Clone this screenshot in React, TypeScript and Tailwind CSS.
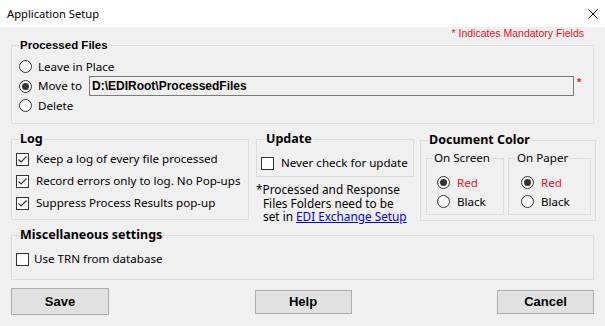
import type { ReactNode } from 'react';

const Radio = ({ checked = false }: { checked?: boolean }) => (
    <span className="w-[13px] h-[13px] shrink-0 rounded-full border border-[#333333] bg-white flex items-center justify-center">
        {checked && <span className="w-[7px] h-[7px] rounded-full bg-[#333333]" />}
    </span>
);

const Check = ({ checked = false }: { checked?: boolean }) => (
    <span className="w-[13px] h-[13px] shrink-0 border border-[#333333] bg-white flex items-center justify-center">
        {checked && (
            <svg width="11" height="11" viewBox="0 0 11 11">
                <polyline points="1.5,5.5 4,8 9.5,2.5" fill="none" stroke="#333333" strokeWidth="1.2" />
            </svg>
        )}
    </span>
);

const Heading = ({ children, className = '' }: { children: ReactNode; className?: string }) => (
    <legend className={`px-[1px] leading-[12px] text-[12.5px] font-bold font-['Noto_Sans',sans-serif] ${className}`}>
        {children}
    </legend>
);

export default function App() {
    return (
        <div className="w-[605px] h-[326px] overflow-hidden flex flex-col bg-[#f0f0f0] text-black text-[11.6px] font-['Noto_Sans',sans-serif]">
            {/* Title bar */}
            <div className="h-[27px] shrink-0 flex items-center justify-between pl-[7px] pr-[7px] bg-white">
                <span className="text-[11.2px] leading-none">Application Setup</span>
                <svg width="10" height="10" viewBox="0 0 10 10">
                    <path d="M0.5 0.5 L9.5 9.5 M9.5 0.5 L0.5 9.5" stroke="#000" strokeWidth="1" />
                </svg>
            </div>

            <div className="flex flex-col px-[11px]">
                <div className="h-[12px] flex justify-end pr-[10px] text-[10.5px] leading-[12px] text-[#e81123] font-['Liberation_Sans',Arial,sans-serif]">
                    * Indicates Mandatory Fields
                </div>

                {/* Processed Files */}
                <fieldset className="h-[85px] border border-[#dcdcdc] pl-[7px] pt-[6px]">
                    <legend className="px-[1px] leading-[12px] text-[11.5px] font-bold font-['Liberation_Sans',Arial,sans-serif]">
                        Processed Files
                    </legend>
                    <div className="h-[19px] flex items-center gap-[6px]">
                        <Radio />
                        <span>Leave in Place</span>
                    </div>
                    <div className="h-[20px] flex items-center">
                        <Radio checked />
                        <span className="ml-[6px] w-[51px]">Move to</span>
                        <div className="w-[485px] h-[20px] border border-[#7a7a7a] bg-[#f0f0f0] flex items-center pl-[2px] text-[12px] font-bold font-['Liberation_Sans',Arial,sans-serif]">
                            D:\EDIRoot\ProcessedFiles
                        </div>
                        <span className="self-start ml-[3px] mt-[1px] text-[11px] leading-none font-bold text-[#e81123] font-['Liberation_Sans',Arial,sans-serif]">
                            *
                        </span>
                    </div>
                    <div className="h-[19px] flex items-center gap-[6px]">
                        <Radio />
                        <span>Delete</span>
                    </div>
                </fieldset>

                <div className="h-[88px] mt-[9px] -mr-[2px] flex items-start">
                    {/* Log */}
                    <fieldset className="w-[238px] h-[87px] shrink-0 border border-[#dcdcdc] pl-[4px] pt-[3px]">
                        <Heading className="ml-[3px]">Log</Heading>
                        {['Keep a log of every file processed', 'Record errors only to log. No Pop-ups', 'Suppress Process Results pop-up'].map((t) => (
                            <div key={t} className="h-[22px] flex items-center gap-[7px]">
                                <Check checked />
                                <span>{t}</span>
                            </div>
                        ))}
                    </fieldset>

                    {/* Update */}
                    <div className="w-[158px] ml-[7px] shrink-0 flex flex-col">
                        <fieldset className="h-[44px] border border-[#dcdcdc] pl-[4px] pt-[7px]">
                            <Heading className="ml-[4px]">Update</Heading>
                            <div className="h-[22px] flex items-center gap-[7px]">
                                <Check />
                                <span>Never check for update</span>
                            </div>
                        </fieldset>
                        <div className="mt-[6px] text-[11.8px] leading-[13.5px] whitespace-nowrap">
                            <div>*Processed and Response</div>
                            <div className="pl-[7px]">Files Folders need to be</div>
                            <div className="pl-[7px]">
                                set in <span className="text-[#0000ee] underline">EDI Exchange Setup</span>
                            </div>
                        </div>
                    </div>

                    {/* Document Color */}
                    <fieldset className="w-[176px] h-[87px] mt-[1px] ml-[6px] shrink-0 border border-[#dcdcdc] pl-[5px] pt-[5px]">
                        <Heading className="ml-[2px]">Document Color</Heading>
                        <div className="flex">
                            <fieldset className="w-[78px] h-[64px] border border-[#dcdcdc] pl-[6px] pt-[8px]">
                                <legend className="px-[1px] leading-[14px]">On Screen</legend>
                                <div className="pl-[4px]">
                                    <div className="h-[19px] flex items-center gap-[7px]">
                                        <Radio checked />
                                        <span className="text-[#e81123]">Red</span>
                                    </div>
                                    <div className="h-[19px] flex items-center gap-[7px]">
                                        <Radio />
                                        <span>Black</span>
                                    </div>
                                </div>
                            </fieldset>
                            <fieldset className="w-[83px] h-[64px] ml-[4px] border border-[#dcdcdc] pl-[7px] pt-[8px]">
                                <legend className="px-[1px] leading-[14px]">On Paper</legend>
                                <div className="pl-[5px]">
                                    <div className="h-[19px] flex items-center gap-[7px]">
                                        <Radio checked />
                                        <span className="text-[#e81123]">Red</span>
                                    </div>
                                    <div className="h-[19px] flex items-center gap-[7px]">
                                        <Radio />
                                        <span>Black</span>
                                    </div>
                                </div>
                            </fieldset>
                        </div>
                    </fieldset>
                </div>

                {/* Miscellaneous settings */}
                <fieldset className="h-[51px] mt-[8px] border border-[#dcdcdc] pl-[4px] pt-[7px]">
                    <Heading className="ml-[3px]">Miscellaneous settings</Heading>
                    <div className="h-[22px] flex items-center gap-[5px]">
                        <Check />
                        <span>Use TRN from database</span>
                    </div>
                </fieldset>

                {/* Buttons */}
                <div className="mt-[8px] flex items-start justify-between text-[13px] font-bold font-['Liberation_Sans',Arial,sans-serif]">
                    <button className="w-[98px] h-[27px] bg-[#e1e1e1] border border-[#adadad]">Save</button>
                    <button className="w-[97px] h-[24px] mt-[2px] bg-[#e1e1e1] border border-[#adadad]">Help</button>
                    <button className="w-[97px] h-[24px] mt-[2px] bg-[#e1e1e1] border border-[#adadad]">Cancel</button>
                </div>
            </div>
        </div>
    );
}
